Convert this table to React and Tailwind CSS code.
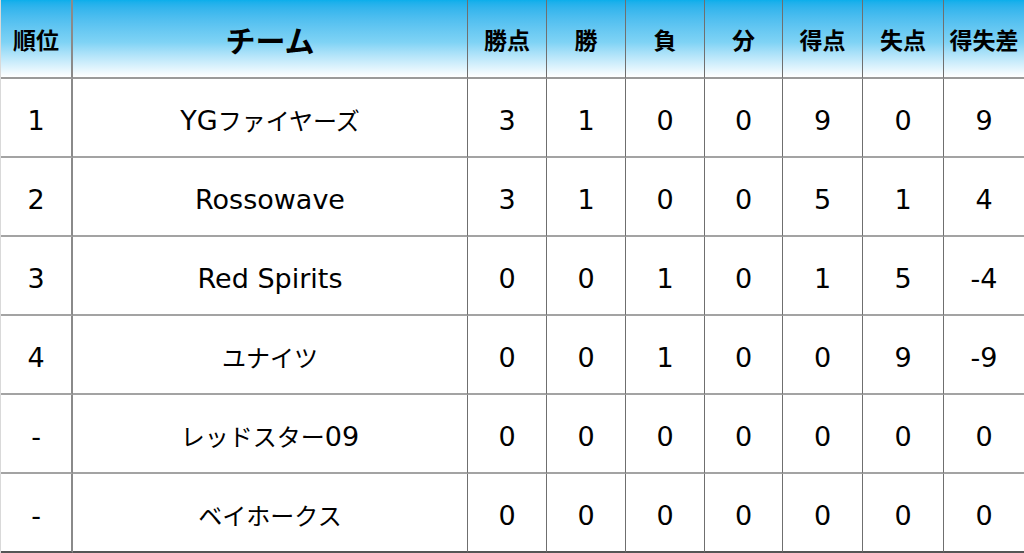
const headers = ["順位", "チーム", "勝点", "勝", "負", "分", "得点", "失点", "得失差"];
const rows = [
  ["1", "YGファイヤーズ", "3", "1", "0", "0", "9", "0", "9"],
  ["2", "Rossowave", "3", "1", "0", "0", "5", "1", "4"],
  ["3", "Red Spirits", "0", "0", "1", "0", "1", "5", "-4"],
  ["4", "ユナイツ", "0", "0", "1", "0", "0", "9", "-9"],
  ["-", "レッドスター09", "0", "0", "0", "0", "0", "0", "0"],
  ["-", "ベイホークス", "0", "0", "0", "0", "0", "0", "0"],
];

const cjk = { fontFamily: '"Noto Sans CJK JP", "Noto Sans", sans-serif' };
const latin = { fontFamily: '"DejaVu Sans", "Noto Sans CJK JP", sans-serif' };

function Mixed({ text }) {
  const parts = text.match(/[\x00-\x7F]+|[^\x00-\x7F]+/g) || [];
  return (
    <span className="whitespace-nowrap">
      {parts.map((p, i) =>
        /^[\x00-\x7F]+$/.test(p) ? (
          <span key={i} className="text-[27px]" style={latin}>{p}</span>
        ) : (
          <span key={i} className="text-[24px]" style={cjk}>{p}</span>
        )
      )}
    </span>
  );
}

export default function App() {
  return (
    <div className="w-[1024px] h-[553px] bg-white overflow-hidden" style={cjk}>
      <div className="grid grid-cols-[72px_395px_79px_79px_79px_78px_80px_81px_81px] border-l border-l-[#d9d9d9] text-black">
        {headers.map((h, i) => (
          <div
            key={h}
            className={`h-[79px] flex items-center justify-center bg-linear-to-b from-[#0aaeeb] via-[#7fd3f5] via-55% to-white border-b-2 border-b-[#9a9a9a] border-r ${i === 0 ? "border-r-2 border-r-[#8a8a8a]" : "border-r-[#6f6f6f]"} font-bold ${i === 1 ? "text-[30px]" : "text-[23px]"} pt-[2px]`}
          >
            {h}
          </div>
        ))}
        {rows.map((r, ri) =>
          r.map((c, ci) => (
            <div
              key={ri + "-" + ci}
              className={`h-[79px] flex items-center justify-center leading-none border-r ${ci === 0 ? "border-r-2 border-r-[#8a8a8a]" : "border-r-[#6f6f6f]"} ${ri === rows.length - 1 ? "border-b-2 border-b-[#555]" : "border-b-2 border-b-[#a3a3a3]"} pt-[5px]`}
            >
              <Mixed text={c} />
            </div>
          ))
        )}
      </div>
    </div>
  );
}
